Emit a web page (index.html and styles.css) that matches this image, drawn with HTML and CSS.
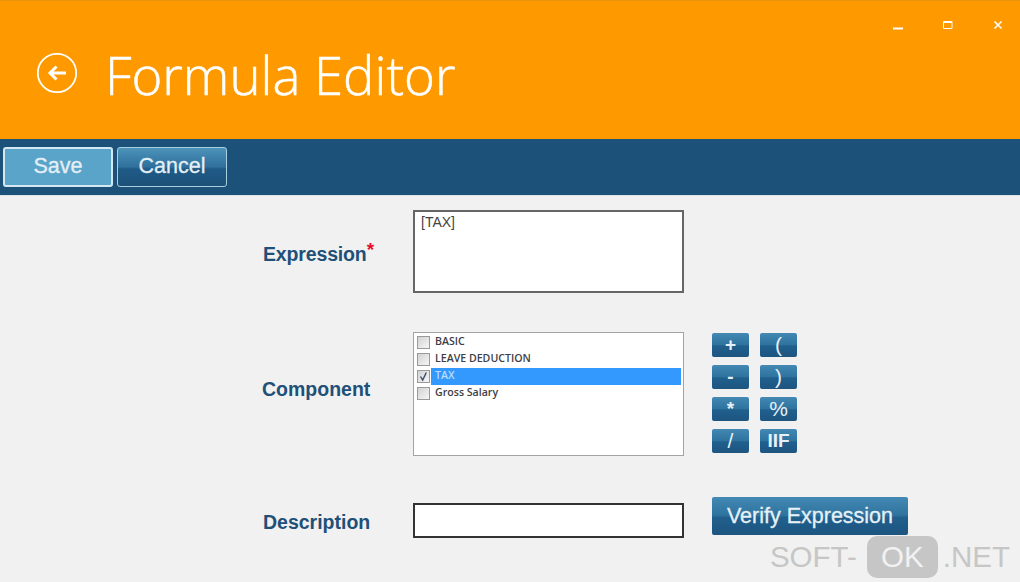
FILE: index.html
```html
<!DOCTYPE html>
<html lang="en">
<head>
  <meta charset="UTF-8">
  <title>Formula Editor</title>
  <link rel="stylesheet" href="styles.css">
</head>
<body>
  <header class="title-bar">
    <svg class="back-icon" width="42" height="42" viewBox="0 0 42 42">
      <circle cx="21" cy="21" r="19.2" fill="none" stroke="#fff" stroke-width="1.8"/>
      <path d="M30 21H14M20.5 14.5L14 21l6.5 6.5" fill="none" stroke="#fff" stroke-width="3"/>
    </svg>
    <h1>Formula Editor</h1>
    <div class="window-controls">
      <svg width="10" height="10" viewBox="0 0 10 10"><path d="M0 8.5h10" stroke="#fff" stroke-width="2"/></svg>
      <svg width="10" height="10" viewBox="0 0 10 10"><path d="M.5 1.5h8.5v7H.5z M.5 2.5h8.5" fill="none" stroke="#fff" stroke-width="1"/></svg>
      <svg width="10" height="10" viewBox="0 0 10 10"><path d="M1.5 1.5l7 7M8.5 1.5l-7 7" stroke="#fff" stroke-width="1.6"/></svg>
    </div>
  </header>

  <nav class="toolbar">
    <button class="tool-btn active">Save</button>
    <button class="tool-btn">Cancel</button>
  </nav>

  <main class="form">
    <div class="row row-expression">
      <label class="field-label">Expression<span class="required">*</span></label>
      <textarea class="expression">[TAX]</textarea>
    </div>

    <div class="row row-component">
      <label class="field-label">Component</label>
      <div class="list-box">
        <div class="list-item"><span class="check"></span><span class="item-text">BASIC</span></div>
        <div class="list-item"><span class="check"></span><span class="item-text">LEAVE DEDUCTION</span></div>
        <div class="list-item selected">
          <span class="check">
            <svg width="13" height="13" viewBox="0 0 13 13"><path d="M3.5 6.5l2.2 3.5 3.6-7.5" fill="none" stroke="#3b4a66" stroke-width="1.4"/></svg>
          </span>
          <span class="item-text">TAX</span>
        </div>
        <div class="list-item"><span class="check"></span><span class="item-text">Gross Salary</span></div>
      </div>
      <div class="operators">
        <button class="blue-btn op-btn">+</button>
        <button class="blue-btn op-btn light">(</button>
        <button class="blue-btn op-btn">-</button>
        <button class="blue-btn op-btn light">)</button>
        <button class="blue-btn op-btn">*</button>
        <button class="blue-btn op-btn light">%</button>
        <button class="blue-btn op-btn light">/</button>
        <button class="blue-btn op-btn">IIF</button>
      </div>
    </div>

    <div class="row row-description">
      <label class="field-label">Description</label>
      <input type="text" class="description">
      <button class="blue-btn verify-btn">Verify Expression</button>
    </div>
  </main>

  <div class="watermark">
    <span>SOFT-</span><span class="watermark-ok">OK</span><span>.NET</span>
  </div>
</body>
</html>
```

FILE: styles.css
```css
* {
  box-sizing: border-box;
}

html, body {
  height: 100%;
}

body {
  margin: 0;
  position: relative;
  overflow: hidden;
  background: #f1f1f1;
  font-family: "Liberation Sans", Arial, sans-serif;
}

button {
  font-family: inherit;
  cursor: pointer;
}

.title-bar {
  display: flex;
  align-items: flex-start;
  height: 139px;
  padding: 51px 17px 0 36px;
  background: #ff9900;
  border-top: 1px solid #e8940f;
}

.back-icon {
  flex: none;
}

h1 {
  margin: -21px 0 0 27px;
  font-family: "Open Sans", sans-serif;
  font-size: 52.7px;
  font-weight: 300;
  line-height: 88px;
  color: #fff;
  -webkit-text-stroke: 0.5px #fff;
}

.window-controls {
  display: flex;
  gap: 40px;
  margin: -32px 0 0 auto;
}

.toolbar {
  display: flex;
  gap: 4px;
  height: 57px;
  padding: 8px 3px;
  background: #1c5279;
  border-bottom: 1px solid #dfe6ea;
}

.tool-btn {
  width: 110px;
  height: 40px;
  padding: 0 0 2px;
  font-size: 21.5px;
  color: #e3eff6;
  background: linear-gradient(#4c93b9, #2f709c 50%, #1f5a86 55%, #1c5279);
  border: 1px solid #a9cfe0;
  border-radius: 3px;
  -webkit-text-stroke: 0.3px #e3eff6;
}

.tool-btn.active {
  background: #5ba4c9;
  border: 2px solid #d3e8f1;
}

.form {
  padding-top: 14px;
}

.row {
  display: grid;
  grid-template-columns: 150px 271px 28px auto;
  padding-left: 263px;
}

.row-expression {
  height: 83px;
  margin-bottom: 39px;
}

.row-component {
  height: 124px;
  margin-bottom: 41px;
}

.field-label {
  font-size: 19.5px;
  font-weight: bold;
  line-height: 22px;
  color: #1f5078;
}

.row-expression .field-label {
  margin-top: 29px;
  letter-spacing: -0.15px;
}

.row-component .field-label {
  margin: 46px 0 0 -1px;
}

.row-description .field-label {
  margin-top: 14px;
}

.required {
  font-size: 19px;
  color: #e4102e;
  vertical-align: 5px;
}

.expression {
  display: block;
  width: 271px;
  height: 83px;
  padding: 2px 6px;
  resize: none;
  font-family: inherit;
  font-size: 14px;
  color: #444;
  background: #fff;
  border: 2px solid #666;
  outline: none;
}

.list-box {
  height: 124px;
  padding: 1px 2px 1px 1px;
  background: #fff;
  border: 1px solid #a3a3a3;
}

.list-item {
  display: flex;
  align-items: center;
  height: 17px;
  padding-left: 2px;
  font-family: "Open Sans", sans-serif;
  font-size: 10.6px;
  font-weight: 600;
  color: #3e3e46;
}

.check {
  flex: none;
  width: 13px;
  height: 13px;
  background: linear-gradient(135deg, #d2d2d2, #f6f6f6);
  border: 1px solid #9a9a9a;
}

.check svg {
  display: block;
  margin: -1px;
}

.item-text {
  flex: 1;
  height: 17px;
  margin-left: 1px;
  padding-left: 4px;
  line-height: 15px;
}

.list-item.selected .item-text {
  color: #b9dcfb;
  background: #3399ff;
}

.operators {
  grid-column: 4;
  display: grid;
  grid-template-columns: 37px 37px;
  grid-auto-rows: 24px;
  gap: 8px 11px;
  margin-top: 1px;
  align-self: start;
}

.blue-btn {
  padding: 0;
  color: #e6f1f7;
  background: linear-gradient(#4389b3, #2f739f 48%, #215f8c 54%, #1c5580);
  border: none;
  border-radius: 2px;
}

.op-btn {
  height: 24px;
  font-size: 19px;
  font-weight: bold;
}

.op-btn.light {
  font-size: 21px;
  font-weight: normal;
}

.description {
  display: block;
  width: 271px;
  height: 35px;
  margin-top: 6px;
  background: #fff;
  border: 2px solid #333;
  outline: none;
}

.verify-btn {
  grid-column: 4;
  width: 196px;
  height: 38px;
  font-size: 21.5px;
  text-align: center;
  -webkit-text-stroke: 0.3px #e6f1f7;
}

.watermark {
  position: absolute;
  right: 10px;
  bottom: 4px;
  display: flex;
  align-items: center;
  font-size: 29.5px;
  line-height: 42px;
  color: #c6c6c6;
}

.watermark-ok {
  width: 71px;
  height: 42px;
  margin: 0 5px 0 10px;
  text-align: center;
  color: #f2f2f2;
  background: #c6c6c6;
  border-radius: 10px;
}
```
